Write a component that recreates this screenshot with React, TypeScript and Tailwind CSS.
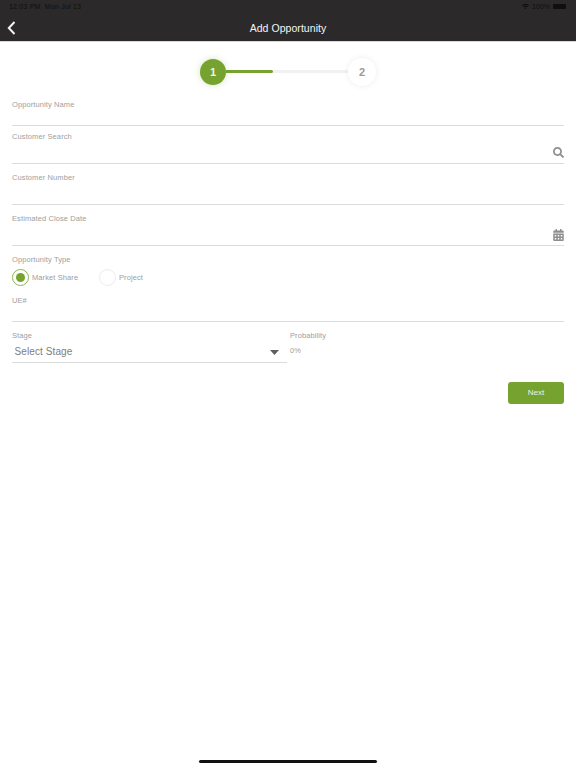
import React from 'react';
import { FaSearch, FaCalendarAlt, FaWifi } from 'react-icons/fa';

const Field = ({ label, className, children }: { label: string; className: string; children?: React.ReactNode }) => {
    return (
        <div className={`flex flex-col justify-between border-b border-[#dcdcdc] ${className}`}>
            <span className="text-[7.5px] leading-[12px] tracking-[0.1px] text-[#a0a0a0]">{label}</span>
            {children && <div className="flex justify-end">{children}</div>}
        </div>
    );
};

const Radio = ({ label, checked, className }: { label: string; checked?: boolean; className: string }) => {
    return (
        <div className={`flex items-center gap-[3px] ${className}`}>
            <div className={`flex h-[17px] w-[17px] items-center justify-center rounded-full border ${checked ? 'border-[#8fb356]' : 'border-[#ececec]'}`}>
                {checked && <div className="h-[9px] w-[9px] rounded-full bg-[#76a22f]" />}
            </div>
            <span className="text-[7.5px] leading-[10px] tracking-[0.1px] text-[#a0a0a0]">{label}</span>
        </div>
    );
};

export default function App() {
    return (
        <div className="flex h-[768px] w-[576px] flex-col overflow-hidden bg-white font-['Liberation_Sans',sans-serif] antialiased">
            <header className="h-[42px] border-b border-[#d8d8d8] bg-[#2b292a]">
                <div className="flex h-[13px] items-center justify-between pl-[9px] pr-[10px] text-[7px] leading-[10px] text-[#0f0f0f]">
                    <span className="tracking-[0.2px]">12:03 PM&nbsp;&nbsp;Mon Jul 13</span>
                    <div className="flex items-center gap-[3px]">
                        <FaWifi className="h-[7px] w-[7px]" />
                        <span>100%</span>
                        <div className="h-[5px] w-[13px] rounded-[1px] bg-[#0f0f0f]" />
                    </div>
                </div>
                <div className="relative flex h-[28px] items-center justify-center pt-[2px]">
                    <svg className="absolute left-[7px] top-[8px] h-[14px] w-[9px]" viewBox="0 0 9 14" fill="none" stroke="#f2f2f2" strokeWidth="2">
                        <path d="M7.5 1 L1.8 7 L7.5 13" />
                    </svg>
                    <h1 className="text-[10.5px] font-medium leading-[14px] tracking-[0.05px] text-[#f5f5f5]">Add Opportunity</h1>
                </div>
            </header>

            <main className="flex flex-col px-3">
                <div className="flex h-[57px] items-start pl-[188px] pt-[17px]">
                    <div className="z-10 flex h-[26px] w-[26px] items-center justify-center rounded-full bg-[#76a22f] text-[11px] font-bold text-[#eef4e2] shadow-[0_0_6px_rgba(118,162,47,0.3)]">1</div>
                    <div className="mt-[11px] h-[3px] w-[47px] rounded-r-full bg-[#76a22f]" />
                    <div className="mt-[11px] h-[3px] w-[75px] bg-[#f1f1f1]" />
                    <div className="-mt-px flex h-[28px] w-[28px] items-center justify-center rounded-full bg-white text-[11px] font-bold text-[#9a9a9a] shadow-[0_0_6px_rgba(0,0,0,0.08)]">2</div>
                </div>

                <Field label="Opportunity Name" className="h-[27px]" />
                <Field label="Customer Search" className="mt-[5px] h-[33px]">
                    <FaSearch className="mb-[5px] h-[11px] w-[11px] text-[#8e8e8e]" />
                </Field>
                <Field label="Customer Number" className="mt-[8px] h-[33px]" />
                <Field label="Estimated Close Date" className="mt-[8px] h-[33px]">
                    <FaCalendarAlt className="mb-[4px] h-[12px] w-[11px] text-[#8e8e8e]" />
                </Field>

                <span className="mt-[8px] text-[7.5px] leading-[12px] tracking-[0.1px] text-[#a0a0a0]">Opportunity Type</span>
                <div className="mt-[3px] flex h-[17px]">
                    <Radio label="Market Share" checked className="w-[87px]" />
                    <Radio label="Project" className="w-[60px]" />
                </div>

                <Field label="UE#" className="mt-[9px] h-[27px]" />

                <div className="mt-[8px] flex">
                    <div className="flex h-[33px] w-[275px] flex-col border-b border-[#dcdcdc]">
                        <span className="text-[7.5px] leading-[12px] tracking-[0.1px] text-[#a0a0a0]">Stage</span>
                        <div className="mt-[3px] flex items-center justify-between pl-[2.5px] pr-[8px]">
                            <span className="text-[10px] leading-[14px] tracking-[0.1px] text-[#7d7d7d]">Select Stage</span>
                            <svg className="h-[5px] w-[9px]" viewBox="0 0 9 5" fill="#5f5f5f">
                                <path d="M0 0 H9 L4.5 5 Z" />
                            </svg>
                        </div>
                    </div>
                    <div className="ml-[3px] flex flex-col">
                        <span className="text-[7.5px] leading-[12px] tracking-[0.1px] text-[#a0a0a0]">Probability</span>
                        <span className="mt-[4px] text-[7.5px] leading-[10px] text-[#a0a0a0]">0%</span>
                    </div>
                </div>

                <div className="mt-[19px] flex justify-end">
                    <button className="h-[22px] w-[56px] rounded-[3px] bg-[#76a22f] text-[8px] text-[#eef4e2]">Next</button>
                </div>
            </main>

            <div className="mt-auto mb-[5px] h-[3px] w-[178px] self-center rounded-full bg-[#111111]" />
        </div>
    );
}
